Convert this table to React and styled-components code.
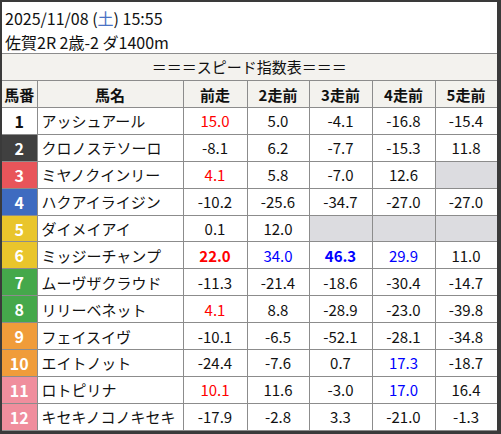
import React from "react";
import styled, { createGlobalStyle } from "styled-components";

const GlobalStyle = createGlobalStyle`
  html, body {
    margin: 0;
    padding: 0;
    background: #ffffff;
  }
  body {
    font-family: "Noto Sans CJK JP", "Noto Sans", sans-serif;
  }
`;

const Frame = styled.div`
  width: 501px;
  height: 434px;
  box-sizing: border-box;
  border-style: solid;
  border-color: #3a3a3a;
  border-width: 2px 4px 3px 2px;
  background: #ffffff;
  overflow: hidden;
`;

const Title = styled.div`
  padding: 4px 0 0 3px;
  height: 51px;
  box-sizing: border-box;
  font-size: 16px;
  line-height: 24px;
  color: #111;
`;

const Sat = styled.span`
  color: #4a72c4;
`;

const Table = styled.table`
  width: 495px;
  border-collapse: collapse;
  table-layout: fixed;
  font-size: 15px;
  color: #111;
`;

const Caption = styled.td`
  height: 26px;
  background: #f3f2ee;
  border: 1px solid #8c8c8c;
  border-left: none;
  text-align: center;
  padding: 0;
  line-height: 20px;
`;

const Th = styled.th`
  height: 26px;
  background: #f3f2ee;
  border: 1px solid #8c8c8c;
  font-weight: 700;
  padding: 0;
  text-align: center;
  &:first-child {
    border-left: none;
  }
`;

const Num = styled.td`
  height: 25.9px;
  border: 1px solid #8c8c8c;
  padding: 0;
  font-size: 16px;
  text-align: center;
  font-weight: 700;
  color: ${(p) => p.$fg};
  background: ${(p) => p.$bg};
  border-left: none;
`;

const Name = styled.td`
  border: 1px solid #8c8c8c;
  padding: 0 0 0 4px;
  white-space: nowrap;
  overflow: hidden;
`;

const Val = styled.td`
  border: 1px solid #8c8c8c;
  padding: 0;
  text-align: center;
  color: ${(p) => (p.$c === "r" ? "#ff0000" : p.$c === "b" ? "#0000ff" : "#111")};
  font-weight: ${(p) => (p.$bold ? 700 : 400)};
  background: ${(p) => (p.$empty ? "#dcdce0" : "transparent")};
`;

const frames = [
  ["#ffffff", "#111"],
  ["#404040", "#fff"],
  ["#e8555a", "#fff"],
  ["#3e6bc0", "#fff"],
  ["#e9c52c", "#fff"],
  ["#e9c52c", "#fff"],
  ["#45a84b", "#fff"],
  ["#45a84b", "#fff"],
  ["#f09c3a", "#fff"],
  ["#f09c3a", "#fff"],
  ["#f08e9d", "#fff"],
  ["#f08e9d", "#fff"],
];

// each value: [text, colour, bold] ; null = empty cell
const rows = [
  ["アッシュアール", [["15.0", "r"], ["5.0"], ["-4.1"], ["-16.8"], ["-15.4"]]],
  ["クロノステソーロ", [["-8.1"], ["6.2"], ["-7.7"], ["-15.3"], ["11.8"]]],
  ["ミヤノクインリー", [["4.1", "r"], ["5.8"], ["-7.0"], ["12.6"], null]],
  ["ハクアイライジン", [["-10.2"], ["-25.6"], ["-34.7"], ["-27.0"], ["-27.0"]]],
  ["ダイメイアイ", [["0.1"], ["12.0"], null, null, null]],
  ["ミッジーチャンプ", [["22.0", "r", true], ["34.0", "b"], ["46.3", "b", true], ["29.9", "b"], ["11.0"]]],
  ["ムーヴザクラウド", [["-11.3"], ["-21.4"], ["-18.6"], ["-30.4"], ["-14.7"]]],
  ["リリーベネット", [["4.1", "r"], ["8.8"], ["-28.9"], ["-23.0"], ["-39.8"]]],
  ["フェイスイヴ", [["-10.1"], ["-6.5"], ["-52.1"], ["-28.1"], ["-34.8"]]],
  ["エイトノット", [["-24.4"], ["-7.6"], ["0.7"], ["17.3", "b"], ["-18.7"]]],
  ["ロトピリナ", [["10.1", "r"], ["11.6"], ["-3.0"], ["17.0", "b"], ["16.4"]]],
  ["キセキノコノキセキ", [["-17.9"], ["-2.8"], ["3.3"], ["-21.0"], ["-1.3"]]],
];

export default function App() {
  return (
    <Frame>
      <GlobalStyle />
      <Title>
        <div>
          2025/11/08 (<Sat>土</Sat>) 15:55
        </div>
        <div>佐賀2R 2歳-2 ダ1400m</div>
      </Title>
      <Table>
        <colgroup>
          <col style={{ width: 35 }} />
          <col style={{ width: 146 }} />
          <col style={{ width: 64 }} />
          <col style={{ width: 62 }} />
          <col style={{ width: 63 }} />
          <col style={{ width: 63 }} />
          <col style={{ width: 62 }} />
        </colgroup>
        <tbody>
          <tr>
            <Caption colSpan={7}>＝＝＝スピード指数表＝＝＝</Caption>
          </tr>
          <tr>
            <Th>馬番</Th>
            <Th>馬名</Th>
            <Th>前走</Th>
            <Th>2走前</Th>
            <Th>3走前</Th>
            <Th>4走前</Th>
            <Th>5走前</Th>
          </tr>
          {rows.map(([name, vals], i) => (
            <tr key={name}>
              <Num $bg={frames[i][0]} $fg={frames[i][1]}>
                {i + 1}
              </Num>
              <Name>{name}</Name>
              {vals.map((v, j) =>
                v ? (
                  <Val key={j} $c={v[1]} $bold={v[2]}>
                    {v[0]}
                  </Val>
                ) : (
                  <Val key={j} $empty />
                )
              )}
            </tr>
          ))}
        </tbody>
      </Table>
    </Frame>
  );
}
